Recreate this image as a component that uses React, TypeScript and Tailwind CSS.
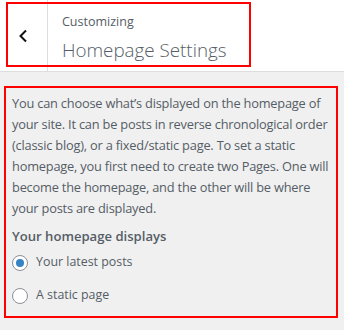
import { useState } from "react"

const options = [
  { id: "posts", label: "Your latest posts" },
  { id: "page", label: "A static page" },
]

const description = [
  "You can choose what’s displayed on the homepage of",
  "your site. It can be posts in reverse chronological order",
  "(classic blog), or a fixed/static page. To set a static",
  "homepage, you first need to create two Pages. One will",
  "become the homepage, and the other will be where",
  "your posts are displayed.",
]

export default function App() {
  const [selected, setSelected] = useState("posts")

  return (
    <div className="w-[344px] h-[330px] bg-[#f0f0f0] text-[#555d66] font-['Open_Sans',sans-serif] overflow-hidden">
      <div className="relative flex h-[72px] bg-white border-b border-[#dddddd]">
        <button className="w-[48px] flex items-center justify-center border-r border-[#dddddd]">
          <svg width="12" height="14" viewBox="0 0 12 14" className="ml-[-2px]">
            <polyline points="9,1.5 3.5,7 9,12.5" fill="none" stroke="#111" strokeWidth="2" />
          </svg>
        </button>
        <div className="pl-[14px] pt-[13px]">
          <div className="text-[12.5px] leading-[18px]">Customizing</div>
          <div className="text-[18.8px] leading-[28px] font-light mt-[5px]">Homepage Settings</div>
        </div>
        <div className="absolute left-[6px] top-[2px] w-[245px] h-[65px] border-2 border-[#ff0000] pointer-events-none" />
      </div>

      <div className="ml-[4px] mt-[14px] w-[334px] h-[232px] border-2 border-[#ff0000] pl-[6px] pt-[5px]">
        <p className="text-[12.8px] leading-[21px] tracking-[-0.2px] whitespace-nowrap">
          {description.map((line, i) => (
            <span key={i} className="block">{line}</span>
          ))}
        </p>
        <div className="mt-[7px] text-[13.1px] font-semibold leading-[20px]">Your homepage displays</div>
        <div className="mt-[6px] flex flex-col gap-[12px]">
          {options.map((o) => (
            <label key={o.id} className="flex items-center gap-[8px] h-[21px] text-[12.4px] cursor-pointer" onClick={() => setSelected(o.id)}>
              <span className="w-[16px] h-[16px] rounded-full border border-[#8c8f94] bg-white flex items-center justify-center">
                {selected === o.id && <span className="w-[8px] h-[8px] rounded-full bg-[#3582c4]" />}
              </span>
              {o.label}
            </label>
          ))}
        </div>
      </div>
    </div>
  )
}
